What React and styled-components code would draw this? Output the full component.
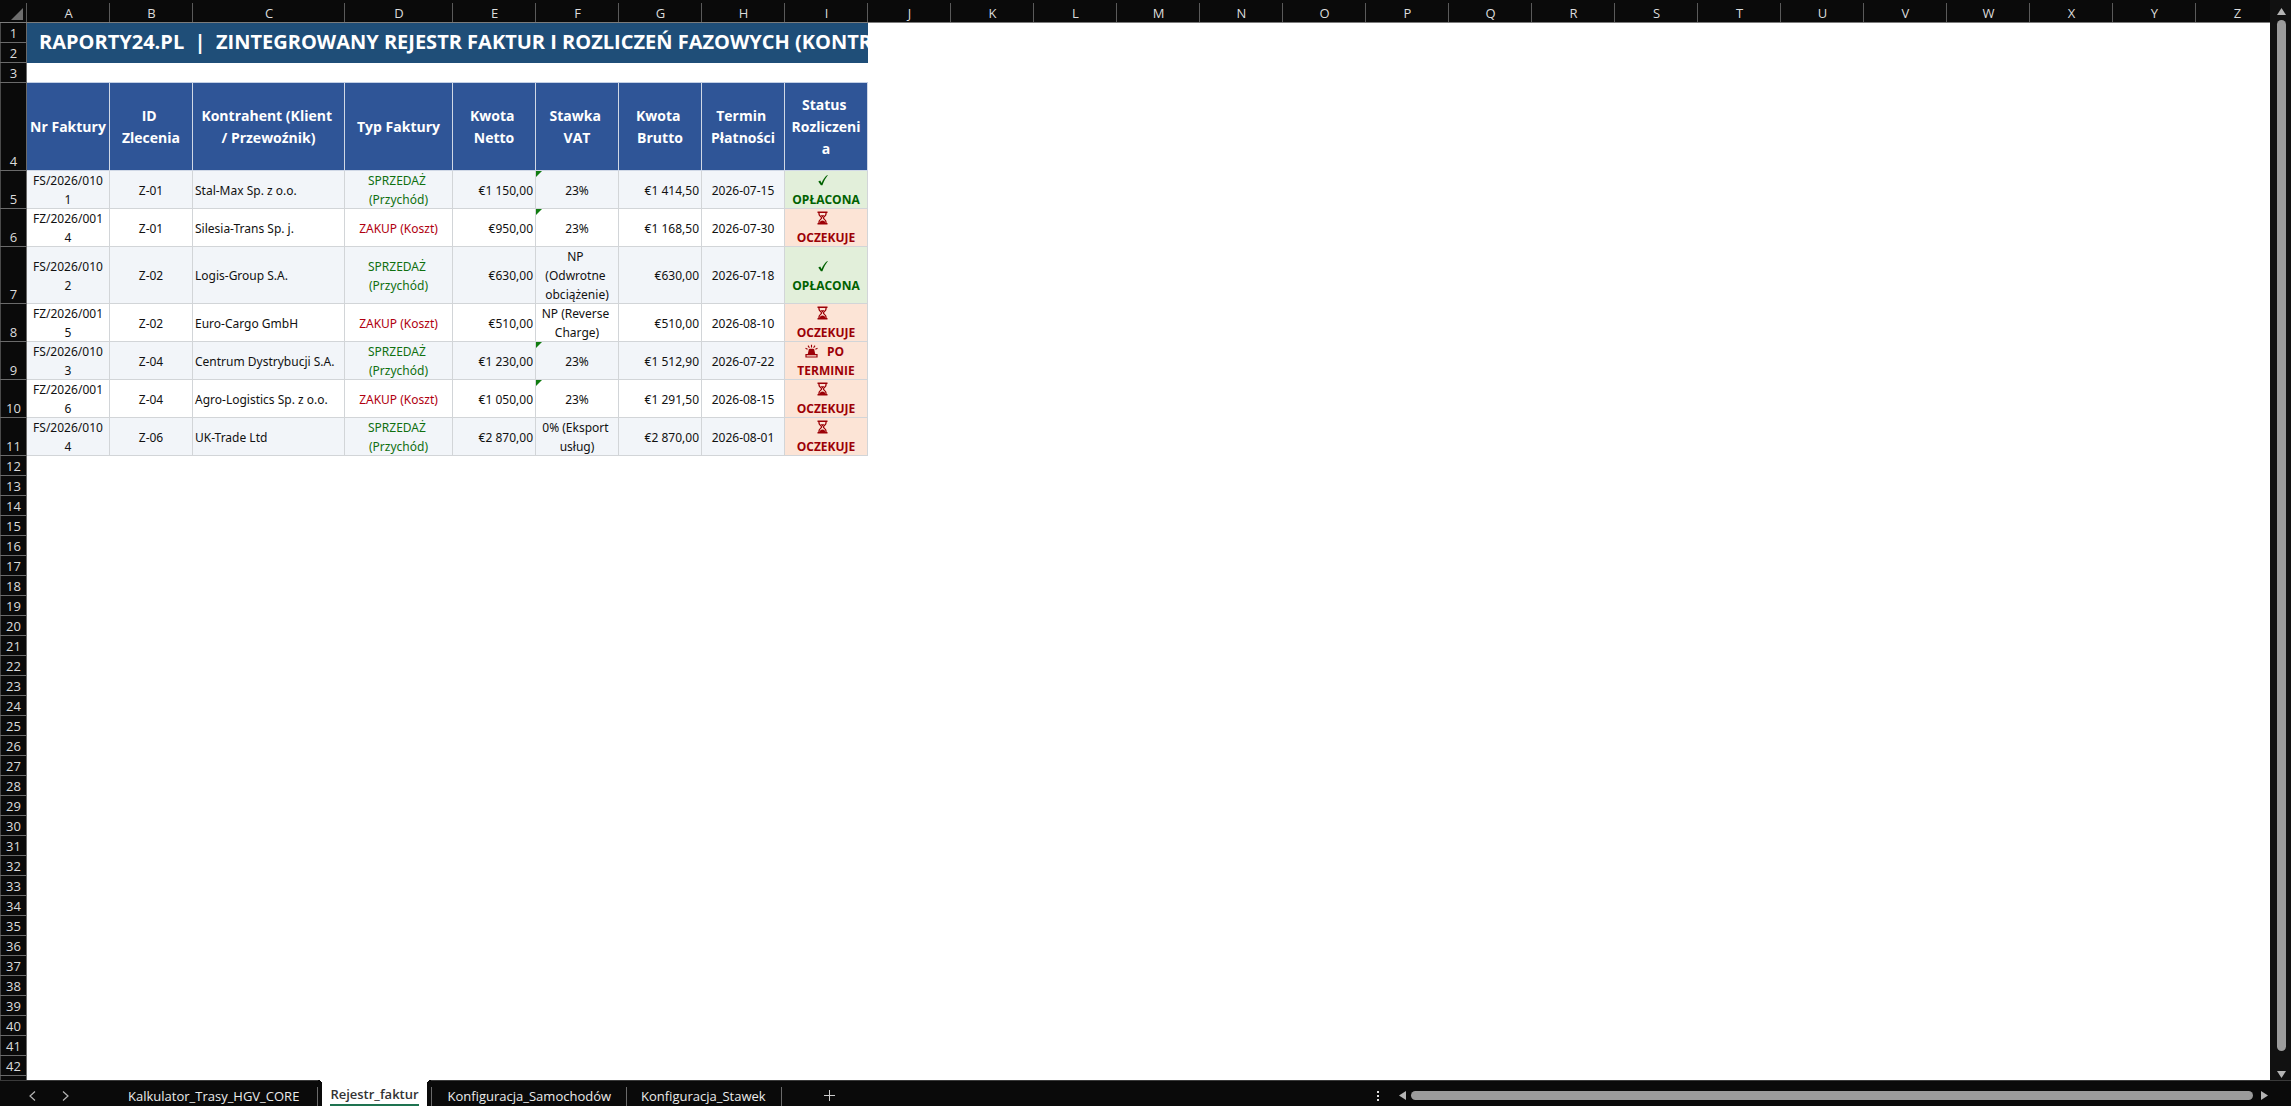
import styled, { createGlobalStyle } from 'styled-components';

const GlobalStyle = createGlobalStyle`
  body {
    margin: 0;
    background: #0a0a0a;
    font-family: "Open Sans", "Noto Sans", sans-serif;
  }

  * {
    box-sizing: border-box;
  }

  button {
    padding: 0;
    border: 0;
    background: none;
    color: inherit;
    font: inherit;
  }
`

const Workbook = styled.div`
  height: 100vh;
  display: flex;
  flex-direction: column;
  background: #0a0a0a;
`

const SheetArea = styled.main`
  flex: 1;
  min-height: 0;
  display: flex;
`

const SheetView = styled.div`
  flex: 1;
  min-width: 0;
  overflow: hidden;
  background: #fff;
`

const Grid = styled.table`
  width: 100%;
  table-layout: fixed;
  border-collapse: separate;
  border-spacing: 0;
`

const Column = styled.col`
  width: ${({ $width }) => $width}px;
`

const Row = styled.tr`
  height: ${({ $height }) => $height}px;
`

const HeadCell = styled.th`
  height: 23px;
  padding: 3px 0 0;
  background: linear-gradient(#5a5a5a, #5a5a5a) right 0 top 3px / 1px 100% no-repeat #0a0a0a;
  box-shadow: inset 0 -1px #7c7c7c;
  color: #dcdcdc;
  font-size: 13px;
  font-weight: 400;
  line-height: 18px;
`

const CornerCell = styled(HeadCell)`
  padding: 5px 4px 0 0;

  svg {
    display: block;
    margin-left: auto;
  }
`

const RowNumber = styled.th`
  padding: 0;
  background: #0a0a0a;
  box-shadow: inset -1px -1px #6a6a6a, inset 1px 0 #4a4a4a;
  color: #dcdcdc;
  font-size: 13px;
  font-weight: 400;
  line-height: 20px;
  vertical-align: bottom;
`

const TitleCell = styled.td`
  padding: 0 0 2px 12px;
  overflow: hidden;
  background: #1f4e78;
  color: #fff;
  font-size: 20px;
  font-weight: 700;
  line-height: 26px;
  white-space: pre;
`

const EmptyCell = styled.td`
  padding: 0;
  box-shadow: ${({ $ruled }) => $ruled ? 'inset 0 -1px #c3d0e6' : 'none'};
`

const LabelCell = styled.th`
  padding: 0 3px 0 2px;
  background: #2f5597;
  box-shadow: inset -1px -1px #d0d8e6;
  color: #fff;
  font-size: 14px;
  font-weight: 700;
  line-height: 22px;
  white-space: break-spaces;
`

const DataCell = styled.td`
  position: relative;
  padding: 0 3px 0 2px;
  background: ${({ $fill }) => $fill};
  box-shadow: inset -1px -1px #d2d5d8;
  color: ${({ $color }) => $color || '#111'};
  font-family: "Noto Sans", "Open Sans", sans-serif;
  font-size: 12px;
  line-height: 19px;
  text-align: ${({ $align }) => $align || 'center'};
  white-space: break-spaces;
`

const StatusCell = styled(DataCell)`
  font-family: "Open Sans", "Noto Sans", sans-serif;
  font-weight: 700;
`

const ErrorMark = styled.span`
  position: absolute;
  top: 0;
  left: 0;
  border-top: 6px solid #107c10;
  border-right: 6px solid transparent;
`

const StatusIcon = styled.svg`
  width: ${({ $width }) => $width}px;
  height: 14px;
  vertical-align: -2px;
`

const VerticalBar = styled.div`
  flex: 0 0 21px;
  padding: 8px 5px 2px 7px;
  display: flex;
  flex-direction: column;
  align-items: center;
  gap: 5px;
  background: #111;
`

const Thumb = styled.div`
  flex: 1;
  min-width: 9px;
  min-height: 9px;
  border-radius: 5px;
  background: #9b9b9b;
`

const VerticalThumb = styled(Thumb)`
  width: 9px;
  margin-bottom: 15px;
`

const ArrowButton = styled.button`
  flex: none;
  display: flex;
`

const BottomBar = styled.footer`
  height: 26px;
  display: flex;
  border-top: 1px solid #3a3a3a;
  background: #0a0a0a;
  color: #ececec;
`

const SheetNav = styled.div`
  width: 107px;
  padding: 4px 0 0 28px;
  display: flex;
  align-items: center;
  gap: 24px;
  color: #b5b5b5;
`

const Tabs = styled.nav`
  flex: 1;
  display: flex;
`

const Tab = styled.button`
  position: relative;
  padding: 5px ${({ $right }) => $right}px 0 ${({ $left }) => $left}px;
  font-size: 13px;
  line-height: 20px;

  &:before,
  &:after {
    content: "";
    position: absolute;
    top: 6px;
    bottom: 0;
    width: 1px;
    background: #6a6a6a;
  }

  &:before {
    left: 4px;
    display: ${({ $divided }) => $divided ? 'block' : 'none'};
  }

  &:after {
    right: 0;
  }
`

const ActiveTab = styled.button`
  position: relative;
  margin: -1px 0 0 4px;
  padding: 3px 8px 0;
  background: #fff;
  color: #333;
  font-size: 13px;
  font-weight: 600;
  line-height: 20px;

  span {
    display: block;
    height: 22px;
    border-bottom: 2px solid #1e7350;
  }

  &:before,
  &:after {
    content: "";
    position: absolute;
    top: 0;
    width: 4px;
    height: 4px;
  }

  &:before {
    left: -4px;
    background: radial-gradient(circle at 0 100%, #0a0a0a 4px, #fff 4px);
  }

  &:after {
    right: -4px;
    background: radial-gradient(circle at 100% 100%, #0a0a0a 4px, #fff 4px);
  }
`

const AddTab = styled.button`
  padding: 4px 0 0 42px;
  display: flex;
  align-items: center;
`

const HorizontalBar = styled.div`
  flex: 0 0 40%;
  padding: 4px 23px 0 2px;
  display: flex;
  align-items: center;
  gap: 5px;
`

const MoreButton = styled.button`
  width: 3px;
  margin-right: 14px;
  display: flex;
`

const HorizontalThumb = styled(Thumb)`
  height: 9px;
  margin-right: 3px;
`

const letters = 'ABCDEFGHIJKLMNOPQRSTUVWXYZ'.split('');
const widths = { C: 152, D: 108 };

const title = 'RAPORTY24.PL  |  ZINTEGROWANY REJESTR FAKTUR I ROZLICZEŃ FAZOWYCH (KONTR';

const labels = [
  'Nr Faktury',
  'ID \nZlecenia',
  'Kontrahent (Klient \n/ Przewoźnik)',
  'Typ Faktury',
  'Kwota \nNetto',
  'Stawka \nVAT',
  'Kwota \nBrutto',
  'Termin \nPłatności',
  'Status \nRozliczeni\na',
];

const invoices = [
  { nr: 'FS/2026/010\n1', id: 'Z-01', client: 'Stal-Max Sp. z o.o.', sale: true, net: '€1 150,00', vat: '23%', gross: '€1 414,50', due: '2026-07-15', status: 'paid' },
  { nr: 'FZ/2026/001\n4', id: 'Z-01', client: 'Silesia-Trans Sp. j.', sale: false, net: '€950,00', vat: '23%', gross: '€1 168,50', due: '2026-07-30', status: 'waiting' },
  { nr: 'FS/2026/010\n2', id: 'Z-02', client: 'Logis-Group S.A.', sale: true, net: '€630,00', vat: 'NP \n(Odwrotne \nobciążenie)', gross: '€630,00', due: '2026-07-18', status: 'paid', height: 57 },
  { nr: 'FZ/2026/001\n5', id: 'Z-02', client: 'Euro-Cargo GmbH', sale: false, net: '€510,00', vat: 'NP (Reverse \nCharge)', gross: '€510,00', due: '2026-08-10', status: 'waiting' },
  { nr: 'FS/2026/010\n3', id: 'Z-04', client: 'Centrum Dystrybucji S.A.', sale: true, net: '€1 230,00', vat: '23%', gross: '€1 512,90', due: '2026-07-22', status: 'overdue' },
  { nr: 'FZ/2026/001\n6', id: 'Z-04', client: 'Agro-Logistics Sp. z o.o.', sale: false, net: '€1 050,00', vat: '23%', gross: '€1 291,50', due: '2026-08-15', status: 'waiting' },
  { nr: 'FS/2026/010\n4', id: 'Z-06', client: 'UK-Trade Ltd', sale: true, net: '€2 870,00', vat: '0% (Eksport \nusług)', gross: '€2 870,00', due: '2026-08-01', status: 'waiting' },
];

const emptyRows = Array.from({ length: 31 }, (_, i) => i + 12);

const CheckIcon = () => (
  <StatusIcon $width={10} viewBox="0 0 10 14" aria-hidden="true">
    <path d="M0.3 8.6 L2.2 7.6 L3.6 9.9 C5 6.6 6.8 4 9.3 2 L9.8 2.3 C7.6 5 5.8 8.4 4.4 12.2 L2.9 12.2 Z" fill="currentColor" />
  </StatusIcon>
)

const HourglassIcon = () => (
  <StatusIcon $width={11} viewBox="0 0 11 14" aria-hidden="true">
    <path d="M0.5 1.2 H10.5 M0.5 12.8 H10.5" stroke="currentColor" strokeWidth="1.6" />
    <path d="M2 1.5 V3 C2 5.2 4.6 5.8 4.6 7 C4.6 8.2 2 8.8 2 11 V12.5 M9 1.5 V3 C9 5.2 6.4 5.8 6.4 7 C6.4 8.2 9 8.8 9 11 V12.5" fill="none" stroke="currentColor" strokeWidth="1.3" />
    <path d="M3.4 4.3 H7.6 L5.5 6.6 Z M2.4 12.5 C2.6 10.6 4 9.4 5.5 9.4 C7 9.4 8.4 10.6 8.6 12.5 Z" fill="currentColor" />
  </StatusIcon>
)

const SirenIcon = () => (
  <StatusIcon $width={13} viewBox="0 0 13 14" aria-hidden="true">
    <path d="M2.8 10 L3.8 5.6 Q4 4.8 4.8 4.8 H8.2 Q9 4.8 9.2 5.6 L10.2 10 Z" fill="currentColor" />
    <path d="M1 10.7 H12 V13 H1 Z" fill="none" stroke="currentColor" strokeWidth="1.2" />
    <path d="M6.5 0.8 V3.4 M3 1.6 L4.4 3.8 M10 1.6 L8.6 3.8 M0.5 4.3 L2.6 5.3 M12.5 4.3 L10.4 5.3" stroke="currentColor" strokeWidth="1.1" />
  </StatusIcon>
)

const statuses = {
  paid: { icon: <CheckIcon />, text: '  \nOPŁACONA', fill: '#e2efda', color: '#006100' },
  waiting: { icon: <HourglassIcon />, text: '  \nOCZEKUJE', fill: '#fce4d6', color: '#9c0006' },
  overdue: { icon: <SirenIcon />, text: '   PO \nTERMINIE', fill: '#fce4d6', color: '#9c0006' },
};

const InvoiceRow = ({ invoice, number }) => {
  const { nr, id, client, sale, net, vat, gross, due, height } = invoice;
  const status = statuses[invoice.status];
  const fill = sale ? '#f2f5f9' : '#fff';

  return (
    <Row $height={height || 38}>
      <RowNumber scope="row">{ number }</RowNumber>
      <DataCell $fill={fill}>{ nr }</DataCell>
      <DataCell $fill={fill}>{ id }</DataCell>
      <DataCell $fill={fill} $align="left">{ client }</DataCell>
      <DataCell $fill={fill} $color={sale ? '#107010' : '#b00010'}>
        { sale ? 'SPRZEDAŻ \n(Przychód)' : 'ZAKUP (Koszt)' }
      </DataCell>
      <DataCell $fill={fill} $align="right">{ net }</DataCell>
      <DataCell $fill={fill}>
        { vat === '23%' && <ErrorMark /> }
        { vat }
      </DataCell>
      <DataCell $fill={fill} $align="right">{ gross }</DataCell>
      <DataCell $fill={fill}>{ due }</DataCell>
      <StatusCell $fill={status.fill} $color={status.color}>
        { status.icon }{ status.text }
      </StatusCell>
    </Row>
  );
}

const Arrow = ({ label, points, width, height }) => (
  <ArrowButton aria-label={label}>
    <svg width={width} height={height} viewBox={`0 0 ${width} ${height}`}>
      <polygon points={points} fill="#b4b4b4" />
    </svg>
  </ArrowButton>
)

export default function App() {
  return (
    <Workbook>
      <GlobalStyle />
      <SheetArea>
        <SheetView>
          <Grid>
            <colgroup>
              <Column $width={27} />
              { letters.map(letter => <Column key={letter} $width={widths[letter] || 83} />) }
            </colgroup>
            <thead>
              <tr>
                <CornerCell>
                  <svg width="12" height="12" viewBox="0 0 12 12">
                    <polygon points="12,0 12,12 0,12" fill="#6e6e6e" />
                  </svg>
                </CornerCell>
                { letters.map(letter => <HeadCell key={letter} scope="col">{ letter }</HeadCell>) }
              </tr>
            </thead>
            <tbody>
              <Row $height={20}>
                <RowNumber scope="row">1</RowNumber>
                <TitleCell colSpan={9} rowSpan={2}>{ title }</TitleCell>
              </Row>
              <Row $height={20}>
                <RowNumber scope="row">2</RowNumber>
              </Row>
              <Row $height={20}>
                <RowNumber scope="row">3</RowNumber>
                <EmptyCell colSpan={9} $ruled />
              </Row>
              <Row $height={88}>
                <RowNumber scope="row">4</RowNumber>
                { labels.map(label => <LabelCell key={label} scope="col">{ label }</LabelCell>) }
              </Row>
              { invoices.map((invoice, i) => (
                <InvoiceRow key={invoice.nr} invoice={invoice} number={i + 5} />
              )) }
              { emptyRows.map(number => (
                <Row key={number} $height={20}>
                  <RowNumber scope="row">{ number }</RowNumber>
                  <EmptyCell colSpan={26} />
                </Row>
              )) }
              <Row $height={20}>
                <RowNumber as="td" />
                <EmptyCell colSpan={26} />
              </Row>
            </tbody>
          </Grid>
        </SheetView>
        <VerticalBar>
          <Arrow label="Przewiń w górę" points="4.5,0 9,7 0,7" width={9} height={7} />
          <VerticalThumb />
          <Arrow label="Przewiń w dół" points="0,0 9,0 4.5,7" width={9} height={7} />
        </VerticalBar>
      </SheetArea>

      <BottomBar>
        <SheetNav>
          <ArrowButton aria-label="Poprzedni arkusz">
            <svg width="9" height="10" viewBox="0 0 9 10" fill="none" stroke="currentColor" strokeWidth="1.2">
              <path d="M7 0.5 L2 5 L7 9.5" />
            </svg>
          </ArrowButton>
          <ArrowButton aria-label="Następny arkusz">
            <svg width="9" height="10" viewBox="0 0 9 10" fill="none" stroke="currentColor" strokeWidth="1.2">
              <path d="M2 0.5 L7 5 L2 9.5" />
            </svg>
          </ArrowButton>
        </SheetNav>
        <Tabs>
          <Tab $left={21} $right={19}>Kalkulator_Trasy_HGV_CORE</Tab>
          <ActiveTab aria-current="page"><span>Rejestr_faktur</span></ActiveTab>
          <Tab $left={21} $right={16} $divided>Konfiguracja_Samochodów</Tab>
          <Tab $left={14} $right={16}>Konfiguracja_Stawek</Tab>
          <AddTab aria-label="Nowy arkusz">
            <svg width="11" height="11" viewBox="0 0 11 11" stroke="#ccc">
              <path d="M5.5 0 V11 M0 5.5 H11" />
            </svg>
          </AddTab>
        </Tabs>
        <HorizontalBar>
          <MoreButton aria-label="Więcej">
            <svg width="2" height="10" viewBox="0 0 2 10" fill="#ddd">
              <path d="M0 0 H2 V2 H0 Z M0 4 H2 V6 H0 Z M0 8 H2 V10 H0 Z" />
            </svg>
          </MoreButton>
          <Arrow label="Przewiń w lewo" points="7,0 7,9 0,4.5" width={7} height={9} />
          <HorizontalThumb />
          <Arrow label="Przewiń w prawo" points="0,0 7,4.5 0,9" width={7} height={9} />
        </HorizontalBar>
      </BottomBar>
    </Workbook>
  );
}
